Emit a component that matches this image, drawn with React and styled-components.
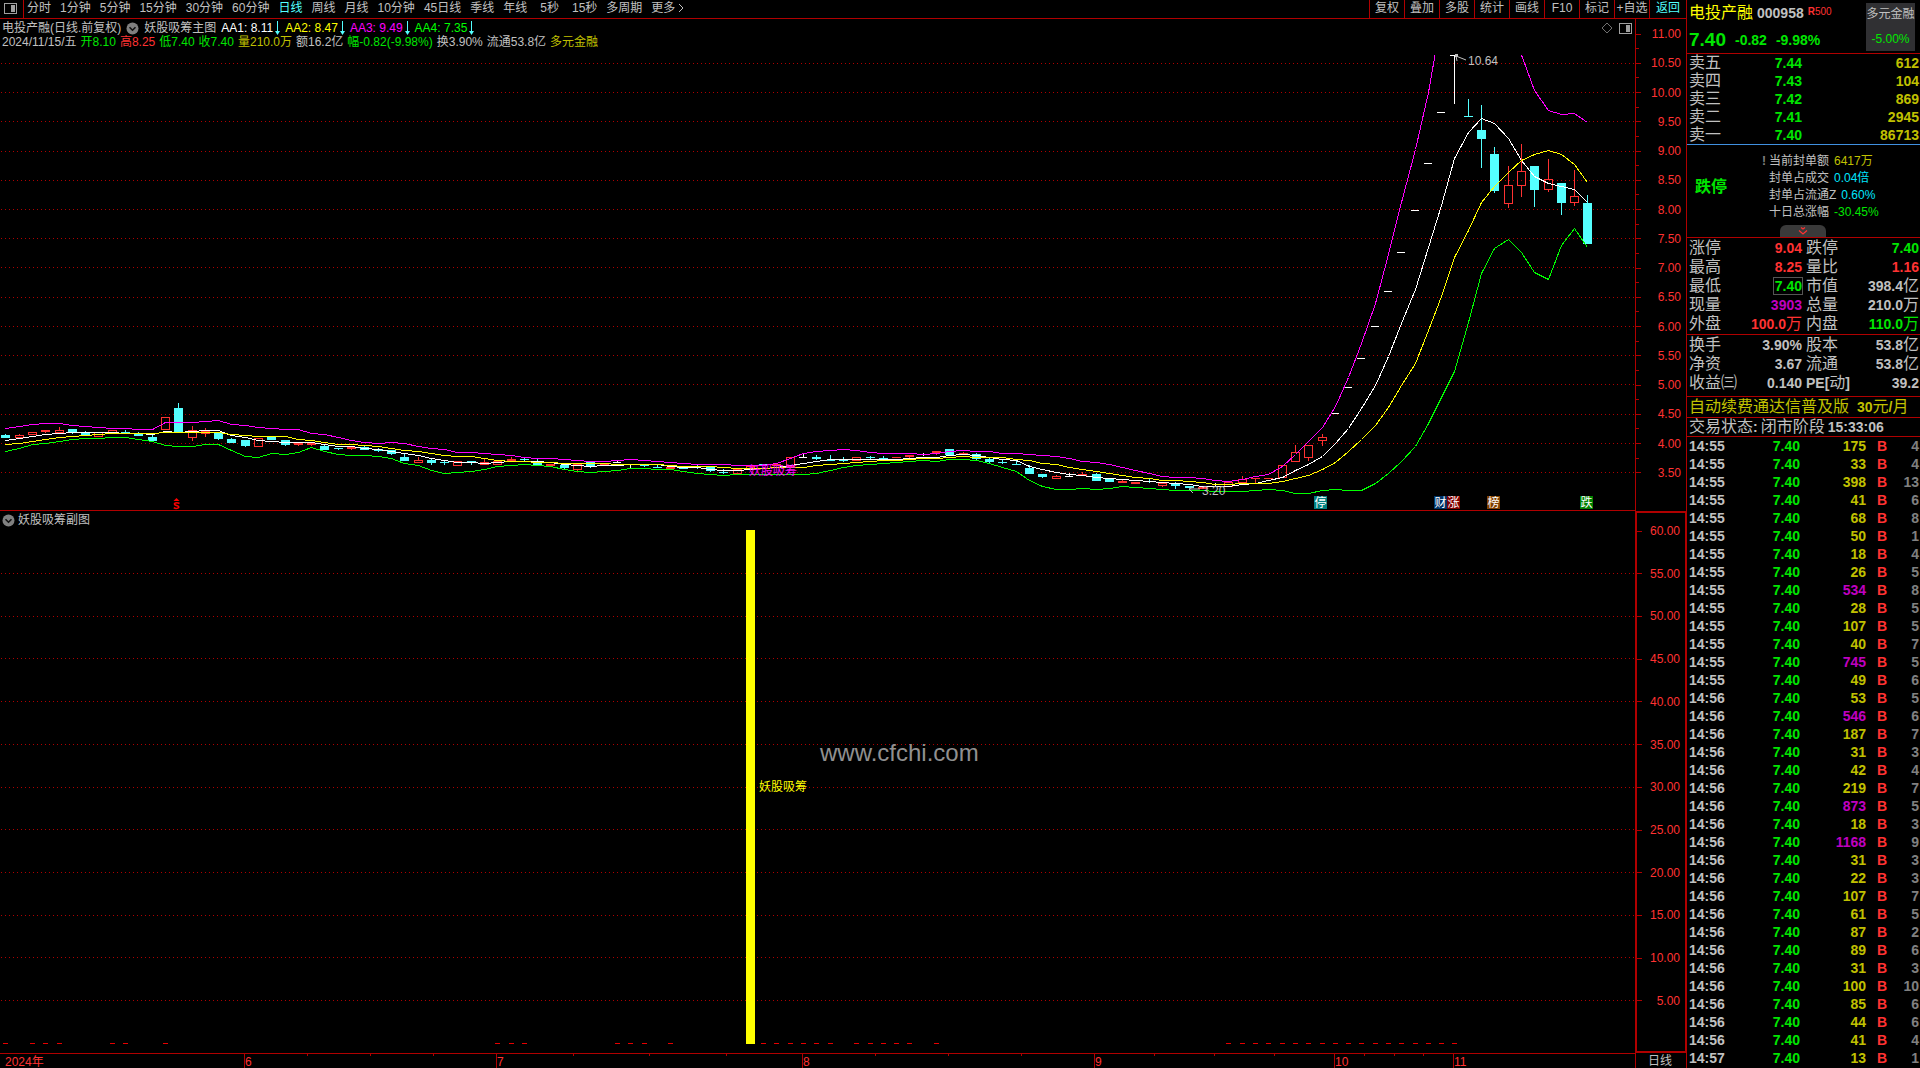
import React from "react";
import styled, { createGlobalStyle } from "styled-components";

const C = {
  line: "#b00000",
  red: "#ff3232",
  green: "#00e600",
  text: "#c0c0c0",
  yellow: "#c0c000",
  purple: "#c000c0",
  cyan: "#54ffff",
};

const FONT = '"Liberation Sans", "Noto Sans CJK SC", sans-serif';

const GlobalStyle = createGlobalStyle`
  * { box-sizing: border-box; }
  body {
    margin: 0;
    background: #000;
    color: ${C.text};
    font: 12px/14px ${FONT};
    overflow: hidden;
  }
  button { font: inherit; color: inherit; background: none; border: 0; padding: 0; margin: 0; cursor: pointer; }
  table { border-collapse: collapse; table-layout: fixed; width: 100%; }
  td, th { padding: 0; font-weight: 400; text-align: left; white-space: nowrap; }
  svg { display: block; }
`;

const Page = styled.div`
  display: grid;
  grid-template-columns: minmax(0, 1fr) 234px;
`;

const Workspace = styled.main`
  display: flex;
  flex-direction: column;
  min-width: 0;
`;

/* ---------- toolbar ---------- */
const Toolbar = styled.header`
  display: flex;
  height: 19px;
  border-bottom: 1px solid ${C.line};
`;
const LayoutButton = styled.button`
  width: 24px;
  display: flex;
  align-items: center;
  padding: 0 0 2px 4px;
  border-right: 1px solid ${C.line};
`;
const Tabs = styled.nav`
  display: flex;
  flex: 1;
  gap: 9px;
  padding: 1px 0 0 3px;
`;
const Tab = styled.button`
  display: flex;
  align-items: center;
  gap: 3px;
  height: 14px;
  white-space: nowrap;
  padding-left: ${(p) => (p.$indent ? "4px" : 0)};
  color: ${(p) => (p.$active ? C.cyan : C.text)};
`;
const Tools = styled.div`
  display: flex;
`;
const Tool = styled.button`
  width: ${(p) => (p.$active ? 37 : 35)}px;
  padding-bottom: 2px;
  white-space: nowrap;
  border-left: 1px solid ${C.line};
  color: ${(p) => (p.$active ? C.cyan : C.text)};
`;

/* ---------- charts ---------- */
const Pane = styled.section`
  display: grid;
  grid-template-columns: minmax(0, 1fr) 51px;
`;
const Plot = styled.div`
  min-width: 0;
  border-bottom: ${(p) => (p.$ruled ? `1px solid ${C.line}` : 0)};
`;
const Caption = styled.div`
  display: flex;
  justify-content: space-between;
  align-items: flex-start;
  height: ${(p) => p.$height}px;
  padding: 2px 3px 0 2px;
`;
const Line = styled.div`
  display: flex;
  align-items: center;
  gap: ${(p) => p.$gap || 4}px;
  height: 14px;
  white-space: nowrap;
`;
const Ink = styled.span`
  color: ${(p) => p.$color || C.text};
  display: inline-flex;
  align-items: center;
  gap: 2px;
`;
const CornerIcons = styled.div`
  display: flex;
  align-items: center;
  gap: 6px;
  height: 14px;
`;
const Drawing = styled.svg`
  width: 100%;
  height: auto;
  font: 12px ${FONT};
`;
const Axis = styled.ul`
  display: flex;
  flex-direction: column;
  justify-content: space-between;
  list-style: none;
  margin: 0;
  padding: ${(p) => p.$pad};
  border: solid ${C.line};
  border-width: ${(p) => (p.$boxed ? "2px 1px 2px 2px" : "0 0 0 1px")};
  color: ${C.red};
`;
const AxisItem = styled.li`
  display: flex;
  align-items: center;
  justify-content: space-between;
  height: 12px;
  line-height: 12px;
  padding-right: 5px;
  &::before {
    content: "";
    width: ${(p) => (p.$minor ? 3 : 5)}px;
    height: 1px;
    background: ${C.line};
  }
`;
const PeriodBox = styled.div`
  border-left: 1px solid ${C.line};
  padding-left: 12px;
  line-height: 16px;
`;

/* ---------- quote panel ---------- */
const Quote = styled.aside`
  border-left: 1px solid ${C.line};
  font-size: 14px;
`;
const Block = styled.section`
  padding: ${(p) => p.$pad || "0 1px 0 2px"};
  border-bottom: 1px solid ${(p) => p.$rule || C.line};
`;
const Title = styled.div`
  display: flex;
  justify-content: space-between;
  padding: 3px 4px 2px 0;
  height: 53px;
`;
const TitleText = styled.div`
  display: flex;
  flex-direction: column;
  justify-content: space-between;
`;
const NameRow = styled.h1`
  display: flex;
  gap: 4px;
  margin: 0;
  line-height: 20px;
  font-size: 16px;
  font-weight: 400;
  color: #ffff00;
`;
const Code = styled.b`
  font-size: 14px;
  color: ${C.text};
`;
const Badge = styled.span`
  font-size: 10px;
  line-height: 18px;
  color: ${C.red};
`;
const PriceRow = styled.div`
  display: flex;
  gap: 9px;
  align-items: center;
  line-height: 22px;
  font-weight: 700;
  color: ${C.green};
`;
const Price = styled.span`
  font-size: 19px;
`;
const Sector = styled.button`
  display: flex;
  flex-direction: column;
  justify-content: space-between;
  align-items: center;
  width: 49px;
  padding: 4px 0 5px;
  background: #303033;
  font-size: 12px;
  white-space: nowrap;
`;
const Cell = styled.td`
  height: ${(p) => p.$h || 18}px;
  line-height: ${(p) => p.$h || 18}px;
  text-align: ${(p) => p.$align || "right"};
  padding-left: ${(p) => p.$left || 0}px;
  color: ${(p) => p.$color || C.text};
  font-weight: 700;
`;
const Label = styled.th`
  height: ${(p) => p.$h || 18}px;
  line-height: ${(p) => p.$h || 18}px;
  padding-left: ${(p) => p.$left || 0}px;
  color: ${C.text};
`;
const Han = styled.span`
  font-size: 16px;
  font-weight: 400;
  line-height: 1;
`;
const Digits = styled.b`
  font-size: 14px;
`;
const Boxed = styled.span`
  outline: 1px solid #555;
  padding: 0 0 0 1px;
`;
const Limit = styled.div`
  display: grid;
  grid-template-columns: 67px 1fr;
  align-items: center;
  padding: 8px 0 4px 6px;
`;
const LimitTag = styled.strong`
  font-size: 16px;
  color: ${C.green};
`;
const Notes = styled.ul`
  list-style: none;
  margin: 0;
  padding: 0;
  font-size: 12px;
`;
const Note = styled.li`
  display: flex;
  gap: 5px;
  height: 17px;
  line-height: 17px;
  white-space: nowrap;
`;
const NoteName = styled.span`
  display: flex;
  align-items: center;
  gap: 2px;
  &::before {
    content: "${(p) => (p.$flag ? "!" : "")}";
    width: 5px;
    font-weight: 700;
    color: #808080;
  }
`;
const Fold = styled.button`
  display: flex;
  align-items: center;
  justify-content: center;
  width: 46px;
  height: 12px;
  margin: 0 0 0 91px;
  border-radius: 6px 6px 0 0;
  background: #3a3a3a;
`;
const Promo = styled.div`
  display: flex;
  gap: ${(p) => p.$gap}px;
  height: ${(p) => p.$h}px;
  line-height: ${(p) => p.$h}px;
  white-space: nowrap;
  color: ${(p) => p.$color || C.text};
`;

/* ---------- data ---------- */
const TABS = ["分时", "1分钟", "5分钟", "15分钟", "30分钟", "60分钟", "日线", "周线", "月线", "10分钟", "45日线", "季线", "年线", "5秒", "15秒", "多周期", "更多"];
const TOOLS = ["复权", "叠加", "多股", "统计", "画线", "F10", "标记", "+自选", "返回"];

const INDICATORS = [
  ["AA1: 8.11", "#ffffff"],
  ["AA2: 8.47", "#ffff00"],
  ["AA3: 9.49", "#ff00ff"],
  ["AA4: 7.35", "#00ff00"],
];
const DAY = [
  ["2024/11/15/五", C.text],
  ["开8.10", C.green],
  ["高8.25", C.red],
  ["低7.40", C.green],
  ["收7.40", C.green],
  ["量210.0万", C.yellow],
  ["额16.2亿", C.text],
  ["幅-0.82(-9.98%)", C.green],
  ["换3.90%", C.text],
  ["流通53.8亿", C.text],
  ["多元金融", C.yellow],
];

// One value per trading day, in drawing units from the top of the window.
const AA3_RISE = [428, 426, 424, 423, 423, 425, 426, 427, 428, 428, 429, 429, 422, 422, 422, 421, 420, 424, 425, 427, 428, 429, 429, 433, 434, 437, 440, 442, 443, 442, 443, 446, 448, 449, 452, 452, 453, 454, 455, 457, 458, 458, 459, 460, 461, 461, 460, 459, 460, 461, 462, 463, 464, 464, 464, 465, 465, 465, 463, 458, 453, 451, 450, 449, 450, 452, 453, 453, 453, 454, 453, 451, 450, 451, 451, 453, 453, 454, 455, 456, 458, 461, 462, 464, 467, 470, 473, 476, 477, 477, 478, 480, 481, 479, 476, 474, 466, 454, 441, 427, 406, 377, 343, 303, 254, 202, 149, 92];
const AA3_FALL = [90, 110, 114, 113, 122];
const AA1 = [440, 438, 436, 434, 433, 432, 432, 432, 432, 433, 433, 434, 431, 432, 431, 430, 430, 435, 437, 440, 441, 442, 442, 442, 444, 446, 446, 448, 449, 451, 453, 455, 458, 460, 462, 462, 463, 462, 461, 461, 461, 462, 464, 465, 466, 465, 465, 464, 464, 464, 466, 467, 467, 469, 470, 470, 469, 468, 467, 465, 463, 461, 459, 459, 459, 459, 459, 459, 458, 457, 457, 455, 454, 455, 457, 459, 460, 466, 469, 472, 474, 475, 477, 478, 479, 480, 481, 482, 483, 484, 486, 486, 486, 484, 483, 480, 477, 470, 464, 456, 443, 428, 408, 385, 356, 323, 289, 247, 205, 158, 132, 118, 123, 138, 160, 176, 183, 186, 189, 202];
const AA2 = [444, 443, 441, 439, 437, 436, 435, 434, 433, 433, 433, 433, 432, 432, 432, 432, 432, 434, 435, 436, 436, 436, 439, 440, 442, 444, 444, 445, 446, 448, 450, 451, 453, 455, 456, 456, 458, 460, 461, 461, 462, 462, 463, 463, 463, 463, 464, 464, 464, 464, 465, 466, 466, 466, 467, 468, 468, 468, 467, 467, 467, 465, 464, 463, 462, 461, 460, 460, 459, 458, 458, 457, 456, 457, 457, 457, 459, 460, 463, 464, 467, 469, 471, 473, 475, 477, 478, 480, 480, 481, 482, 484, 484, 483, 483, 483, 481, 478, 475, 469, 462, 451, 439, 425, 407, 385, 363, 330, 296, 257, 230, 202, 186, 172, 160, 154, 150, 154, 164, 182];
const AA4 = [451, 448, 444, 443, 441, 439, 438, 438, 437, 437, 439, 441, 445, 446, 446, 444, 444, 450, 456, 457, 453, 454, 452, 447, 451, 454, 455, 455, 456, 458, 463, 465, 470, 473, 472, 471, 469, 466, 465, 464, 465, 466, 469, 471, 472, 471, 470, 468, 468, 469, 469, 471, 473, 474, 475, 474, 474, 474, 474, 474, 474, 473, 470, 467, 465, 464, 463, 462, 461, 460, 461, 459, 459, 460, 463, 467, 471, 480, 486, 489, 489, 488, 489, 488, 486, 487, 488, 489, 490, 490, 490, 491, 491, 491, 490, 489, 490, 493, 493, 490, 489, 490, 490, 483, 473, 461, 446, 423, 397, 371, 322, 273, 248, 239, 252, 272, 279, 245, 228, 247];

// day, kind (d: down, u: up, f: flat), body top, body bottom, high, low
const CANDLES = [
  [0, "d", 435, 438, 434], [1, "u", 435, 438, 434], [2, "u", 432, 435], [3, "u", 430, 432, 430, 433], [4, "u", 430, 433, 427],
  [5, "d", 429, 432, 429, 434], [6, "d", 432, 435, 431], [7, "u", 432, 437], [8, "u", 430, 433], [9, "d", 432, 433, 430],
  [10, "d", 433, 436, 432], [11, "d", 437, 441, 435], [12, "u", 417, 430], [13, "d", 408, 432, 403], [14, "u", 430, 438, 426, 441],
  [15, "u", 431, 434, 428, 437], [16, "d", 432, 439, 432, 440], [17, "d", 439, 443, 438], [18, "d", 440, 446, 440, 447], [19, "u", 438, 447],
  [20, "d", 437, 440], [21, "d", 440, 445, 440, 446], [22, "u", 443, 445, 443, 446], [23, "u", 443, 445, 443, 446], [24, "d", 446, 450, 444],
  [25, "d", 448, 449, 448, 450], [26, "u", 447, 449, 447, 450], [27, "d", 447, 450, 446], [28, "d", 449, 451, 448, 452], [29, "d", 450, 454, 450, 455],
  [30, "d", 457, 461, 453], [31, "u", 460, 463, 457], [32, "d", 460, 463, 458, 465], [33, "d", 462, 463, 460, 465], [34, "u", 461, 466],
  [35, "d", 461, 462, 461, 465], [36, "u", 462, 465, 459], [37, "u", 461, 465], [38, "u", 459, 461, 457], [39, "d", 459, 460, 458, 462],
  [40, "d", 461, 465, 459], [41, "u", 464, 466], [42, "d", 465, 468, 465, 469], [43, "u", 464, 470, 464, 471], [44, "d", 462, 466, 462, 468],
  [45, "u", 463, 465], [46, "f", 462, 463, 461], [47, "f", 464, 465, 464, 468], [48, "d", 465, 466, 465, 467], [49, "d", 467, 468, 465],
  [50, "u", 467, 469], [51, "d", 467, 469], [52, "d", 466, 467, 465, 469], [53, "d", 467, 471, 467, 472], [54, "d", 472, 473, 469, 474],
  [55, "u", 469, 474], [56, "u", 466, 469], [57, "d", 464, 465], [58, "u", 464, 466], [59, "u", 457, 467],
  [60, "f", 457, 458, 453], [61, "d", 457, 459, 455, 460], [62, "d", 460, 461, 455], [63, "d", 460, 461, 457, 462], [64, "u", 457, 461],
  [65, "d", 457, 458, 456, 459], [66, "d", 458, 460, 456], [67, "u", 457, 458], [68, "u", 455, 457, 455, 460], [69, "f", 454, 455, 453, 456],
  [70, "u", 451, 453, 451, 455], [71, "d", 449, 455], [72, "u", 453, 454, 452], [73, "d", 454, 459, 453, 460], [74, "d", 459, 462, 458, 463],
  [75, "d", 462, 463, 460, 464], [76, "d", 464, 465, 461], [77, "d", 468, 474, 465], [78, "d", 474, 477, 474, 478], [79, "u", 476, 479, 475],
  [80, "f", 476, 477, 473], [81, "u", 474, 476, 472], [82, "d", 474, 481, 473], [83, "d", 479, 482], [84, "u", 481, 483, 479],
  [85, "u", 482, 484], [86, "d", 481, 482, 479, 483], [87, "u", 483, 486, 483, 487], [88, "d", 484, 486, 482, 489], [89, "d", 486, 488],
  [90, "u", 487, 489], [91, "f", 486, 487, 483], [92, "u", 482, 487], [93, "u", 479, 483, 476], [94, "u", 478, 479, 478, 483],
  [95, "u", 478, 479], [96, "u", 465, 478], [97, "u", 452, 462, 445], [98, "u", 445, 458, 445, 461], [99, "u", 437, 441, 434, 446],
  [100, "f", 413, 414], [101, "f", 387, 388], [102, "f", 358, 359], [103, "f", 326, 327], [104, "f", 291, 292],
  [105, "f", 252, 253], [106, "f", 210, 211], [107, "f", 163, 164], [108, "f", 112, 113], [109, "f", 55, 56, 55, 104],
  [110, "d", 116, 117, 99], [111, "d", 130, 139, 105, 168], [112, "d", 154, 191, 147, 193], [113, "u", 185, 204, 166, 208], [114, "u", 171, 186, 144, 197],
  [115, "d", 166, 190, 166, 207], [116, "u", 179, 190, 159, 192], [117, "d", 183, 203, 183, 215], [118, "u", 196, 203, 170, 206], [119, "d", 203, 244, 195],
];

const MARKS = [
  [1314, "停", "#008080"],
  [1434, "财", "#003366"],
  [1447, "涨", "#800000"],
  [1487, "榜", "#804000"],
  [1580, "跌", "#008000"],
];

const DASH_DAYS = [0, 2, 3, 4, 8, 9, 12, 37, 38, 39, 46, 47, 48, 50, 57, 58, 59, 60, 61, 62, 64, 65, 66, 67, 68, 70, ...Array.from({ length: 18 }, (_, i) => 92 + i)];
const MONTHS = [[244, "6"], [496, "7"], [802, "8"], [1094, "9"], [1334, "10"], [1453, "11"]];
const WEEKS = [307, 370, 433, 573, 649, 726, 875, 948, 1021, 1154, 1214, 1274, 1364, 1394, 1423];

const ASKS = [["卖五", "7.44", "612"], ["卖四", "7.43", "104"], ["卖三", "7.42", "869"], ["卖二", "7.41", "2945"], ["卖一", "7.40", "86713"]];
const NOTES = [
  ["当前封单额", "6417万", C.yellow],
  ["封单占成交", "0.04倍", "#00e6ff"],
  ["封单占流通Z", "0.60%", "#00e6ff"],
  ["十日总涨幅", "-30.45%", C.green],
];
const STATS = [
  ["涨停", "9.04", C.red, "跌停", "7.40", C.green],
  ["最高", "8.25", C.red, "量比", "1.16", C.red],
  ["最低", "7.40", C.green, "市值", "398.4亿", C.text, true],
  ["现量", "3903", C.purple, "总量", "210.0万", C.text],
  ["外盘", "100.0万", C.red, "内盘", "110.0万", C.green],
];
const BASICS = [
  ["换手", "3.90%", C.text, "股本", "53.8亿", C.text],
  ["净资", "3.67", C.text, "流通", "53.8亿", C.text],
  ["收益㈢", "0.140", C.text, "PE[动]", "39.2", C.text],
];
const VOLUMES = [175, 33, 398, 41, 68, 50, 18, 26, 534, 28, 107, 40, 745, 49, 53, 546, 187, 31, 42, 219, 873, 18, 1168, 31, 22, 107, 61, 87, 89, 31, 100, 85, 44, 41, 13];
const COUNTS = [4, 4, 13, 6, 8, 1, 4, 5, 8, 5, 5, 7, 5, 6, 5, 6, 7, 3, 4, 7, 5, 3, 9, 3, 3, 7, 5, 2, 6, 3, 10, 6, 6, 4, 1];
const tickTime = (i) => (i < 14 ? "14:55" : i < 34 ? "14:56" : "14:57");

/* ---------- helpers ---------- */
const dayX = (i) => 5.4 + 13.294 * i;
const toPoints = (values, from = 0) => values.map((y, i) => `${Math.round(dayX(i + from)) + 0.5},${y + 0.5}`).join(" ");

function Mixed({ text }) {
  return text
    .split(/([\u3200-\u9fff]+)/)
    .filter(Boolean)
    .map((part, i) => (/[\u3200-\u9fff]/.test(part) ? <Han key={i}>{part}</Han> : <Digits key={i}>{part}</Digits>));
}

function Candle({ day, kind, top, bottom, high = top, low = bottom }) {
  const x = Math.round(dayX(day)) - 4;
  const color = { d: C.cyan, u: C.red, f: "#ffffff" }[kind];
  const hollow = kind === "u" && bottom - top > 2;
  return (
    <g fill={color}>
      {high < top && <rect x={x + 4} y={high} width="1" height={top - high} />}
      {low > bottom && <rect x={x + 4} y={bottom} width="1" height={low - bottom} />}
      {hollow ? (
        <rect x={x + 0.5} y={top + 0.5} width="8" height={bottom - top - 1} fill="none" stroke={color} />
      ) : (
        <rect x={x} y={top} width={kind === "f" ? 8 : 9} height={bottom - top} />
      )}
    </g>
  );
}

const PanelIcon = ({ size }) => (
  <svg width={size} height={size} viewBox="0 0 13 13" shapeRendering="crispEdges" aria-hidden="true">
    <rect x="0.5" y="1.5" width="12" height="10" rx="1" fill="none" stroke="#a0a0a0" />
    <rect x="7" y="3" width="4" height="7" fill="#a0a0a0" />
  </svg>
);
const DropIcon = () => (
  <svg width="13" height="13" viewBox="0 0 13 13" aria-hidden="true">
    <circle cx="6.5" cy="6.5" r="6" fill="#808080" />
    <path d="M3.5 5.2 6.5 8.2 9.5 5.2" fill="none" stroke="#111" strokeWidth="1.6" />
  </svg>
);
const DownArrow = () => (
  <svg width="5" height="14" viewBox="0 0 5 14" aria-hidden="true">
    <path d="M2 0h1v10h2L2.5 14 0 10h2z" fill={C.cyan} />
  </svg>
);

function Grid({ rows }) {
  return rows.map((y) => (
    <line key={y} x1="1" x2="1635" y1={y + 0.5} y2={y + 0.5} stroke="#b00000" strokeDasharray="1 3" />
  ));
}

function PriceChart() {
  return (
    <Drawing viewBox="0 49 1635 461" role="img" aria-label="妖股吸筹主图">
      <g shapeRendering="crispEdges">
        <Grid rows={Array.from({ length: 15 }, (_, i) => Math.round(63 + i * 29.21))} />
        {CANDLES.map(([day, kind, top, bottom, high, low]) => (
          <Candle key={day} {...{ day, kind, top, bottom, high, low }} />
        ))}
      </g>
      <g fill="none" strokeWidth="1" shapeRendering="crispEdges">
        <polyline points={toPoints(AA4)} stroke="#00ff00" />
        <polyline points={`${toPoints(AA3_RISE)} 1435,55`} stroke="#ff00ff" />
        <polyline points={`1521.5,55 ${toPoints(AA3_FALL, 115)}`} stroke="#ff00ff" />
        <polyline points={toPoints(AA1)} stroke="#ffffff" />
        <polyline points={toPoints(AA2)} stroke="#ffff00" />
      </g>
      <g fill={C.text}>
        <rect x="1455" y="54" width="3" height="3" />
        <path d="M1456 56l10 4M1456 56l1 5" stroke={C.text} />
        <text x="1468" y="65">10.64</text>
        <path d="M1200 489h-11l4-2M1189 489l4 4" fill="none" stroke={C.text} />
        <text x="1202" y="495">3.20</text>
      </g>
      <text x="749" y="475" fill="#ff00ff">妖股吸筹</text>
      <g fill="none" stroke="#ff0000" strokeWidth="1.6">
        <path d="M173.500 501l3-3 3 3z" fill="#ff0000" stroke="none" />
        <path d="M179.500 503.500q-2-1.200-4-.6t-.2 2.200l2.500 .8q2 1.200 0 2.200t-4-.5" />
      </g>
      {MARKS.map(([x, label, color]) => (
        <g key={x}>
          <rect x={x} y="496" width="13" height="13" fill={color} />
          <text x={x + 0.5} y="507" fill="#ffffff">{label}</text>
        </g>
      ))}
    </Drawing>
  );
}

function SignalChart() {
  return (
    <Drawing viewBox="0 530 1635 523" role="img" aria-label="妖股吸筹副图">
      <g shapeRendering="crispEdges">
        <Grid rows={Array.from({ length: 11 }, (_, i) => Math.round(573 + i * 42.7))} />
        <rect x="746" y="530" width="9" height="514" fill="#ffff00" />
        {DASH_DAYS.map((d) => (
          <rect key={d} x={Math.round(dayX(d)) - 2} y="1043" width="5" height="1" fill="#e60000" />
        ))}
      </g>
      <text x="759" y="791" fill="#ffff00">妖股吸筹</text>
      <text x="820" y="761" fill="#909090" fontSize="24">www.cfchi.com</text>
    </Drawing>
  );
}

function TimeAxis() {
  return (
    <Drawing viewBox="0 1053 1635 15" fill={C.red} role="img" aria-label="时间轴">
      <g fill={C.line} shapeRendering="crispEdges">
        <rect x="0" y="1053" width="1635" height="1" />
        {MONTHS.map(([x]) => <rect key={x} x={x} y="1053" width="1" height="15" />)}
        {WEEKS.map((x) => <rect key={x} x={x} y="1053" width="1" height="3" />)}
      </g>
      <text x="5" y="1066">2024年</text>
      {MONTHS.map(([x, m]) => <text key={x} x={x + 1} y="1066">{m}</text>)}
    </Drawing>
  );
}

function StatTable({ rows }) {
  return (
    <table>
      <colgroup>
        <col style={{ width: 50 }} />
        <col style={{ width: 63 }} />
        <col style={{ width: 46 }} />
        <col />
      </colgroup>
      <tbody>
        {rows.map(([a, av, ac, b, bv, bc, boxed]) => (
          <tr key={a}>
            <Label $h={19} scope="row"><Mixed text={a} /></Label>
            <Cell $h={19} $color={ac}>{boxed ? <Boxed><Mixed text={av} /></Boxed> : <Mixed text={av} />}</Cell>
            <Label $h={19} $left={4} scope="row"><Mixed text={b} /></Label>
            <Cell $h={19} $color={bc}><Mixed text={bv} /></Cell>
          </tr>
        ))}
      </tbody>
    </table>
  );
}

export default function App() {
  return (
    <Page>
      <GlobalStyle />
      <Workspace>
        <Toolbar>
          <LayoutButton aria-label="切换布局"><PanelIcon size={13} /></LayoutButton>
          <Tabs>
            {TABS.map((t) => (
              <Tab key={t} $active={t === "日线"} $indent={t.endsWith("秒")}>
                {t}
                {t === "更多" && (
                  <svg width="6" height="10" viewBox="0 0 6 10" aria-hidden="true">
                    <path d="M1 1l4 4-4 4" fill="none" stroke={C.text} />
                  </svg>
                )}
              </Tab>
            ))}
          </Tabs>
          <Tools>
            {TOOLS.map((t) => <Tool key={t} $active={t === "返回"}>{t}</Tool>)}
          </Tools>
        </Toolbar>

        <Pane>
          <Plot $ruled>
            <Caption $height={30}>
              <div>
                <Line $gap={5}>
                  <span>电投产融(日线.前复权)</span>
                  <DropIcon />
                  <span>妖股吸筹主图</span>
                  {INDICATORS.map(([t, c]) => (
                    <Ink key={t} $color={c}>{t}<DownArrow /></Ink>
                  ))}
                </Line>
                <Line>
                  {DAY.map(([t, c]) => <Ink key={t} $color={c}>{t}</Ink>)}
                </Line>
              </div>
              <CornerIcons>
                <svg width="12" height="12" viewBox="0 0 12 12" aria-hidden="true">
                  <path d="M6 1l5 5-5 5-5-5z" fill="none" stroke="#707070" />
                </svg>
                <PanelIcon size={13} />
              </CornerIcons>
            </Caption>
            <PriceChart />
          </Plot>
          <Axis $pad="9px 0 32px">
            {Array.from({ length: 31 }, (_, i) => (
              <AxisItem key={i} $minor={i % 2 === 1}>{i % 2 ? "" : (11 - i / 4).toFixed(2)}</AxisItem>
            ))}
          </Axis>
        </Pane>

        <Pane>
          <Plot>
            <Caption $height={19}>
              <Line $gap={3}>
                <DropIcon />
                <span>妖股吸筹副图</span>
              </Line>
            </Caption>
            <SignalChart />
          </Plot>
          <Axis $boxed $pad="12px 0 44px">
            {Array.from({ length: 12 }, (_, i) => (
              <AxisItem key={i}>{(60 - i * 5).toFixed(2)}</AxisItem>
            ))}
          </Axis>
        </Pane>

        <Pane>
          <TimeAxis />
          <PeriodBox>日线</PeriodBox>
        </Pane>
      </Workspace>

      <Quote>
        <Block>
          <Title>
            <TitleText>
              <NameRow>电投产融 <Code>000958</Code><Badge><b>R</b>500</Badge></NameRow>
              <PriceRow><Price>7.40</Price><span>-0.82</span><span>-9.98%</span></PriceRow>
            </TitleText>
            <Sector><span>多元金融</span><Ink $color={C.green}>-5.00%</Ink></Sector>
          </Title>
        </Block>
        <Block $rule="#4090e0">
          <table>
            <colgroup><col style={{ width: 50 }} /><col style={{ width: 63 }} /><col /></colgroup>
            <tbody>
              {ASKS.map(([n, p, v]) => (
                <tr key={n}>
                  <Label scope="row"><Mixed text={n} /></Label>
                  <Cell $color={C.green}>{p}</Cell>
                  <Cell $color={C.yellow}>{v}</Cell>
                </tr>
              ))}
            </tbody>
          </table>
        </Block>
        <Block>
          <Limit>
            <LimitTag>跌停</LimitTag>
            <Notes>
              {NOTES.map(([n, v, c], i) => (
                <Note key={n}><NoteName $flag={i === 0}>{n}</NoteName><Ink $color={c}>{v}</Ink></Note>
              ))}
            </Notes>
          </Limit>
          <Fold aria-label="收起">
            <svg width="10" height="8" viewBox="0 0 10 8" aria-hidden="true">
              <path d="M3 0.500l2 1.500 2-1.500M1 3.500l4 3.500 4-3.500" fill="none" stroke={C.red} strokeWidth="1.2" />
            </svg>
          </Fold>
        </Block>
        <Block $pad="1px 1px 0 2px"><StatTable rows={STATS} /></Block>
        <Block $pad="1px 1px 3px 2px"><StatTable rows={BASICS} /></Block>
        <Block>
          <Promo $h={20} $gap={8} $color={C.yellow}>
            <span><Mixed text="自动续费通达信普及版" /></span>
            <span><Mixed text="30元/月" /></span>
          </Promo>
        </Block>
        <Block>
          <Promo $h={18} $gap={3}>
            <span><Mixed text="交易状态:" /></span>
            <span><Mixed text="闭市阶段" /></span>
            <span><Mixed text="15:33:06" /></span>
          </Promo>
        </Block>
        <Block as="div" $rule="#000">
          <table>
            <colgroup>
              <col style={{ width: 50 }} /><col style={{ width: 61 }} /><col style={{ width: 66 }} /><col style={{ width: 24 }} /><col />
            </colgroup>
            <tbody>
              {VOLUMES.map((v, i) => (
                <tr key={i}>
                  <Cell $align="left">{tickTime(i)}</Cell>
                  <Cell $color={C.green}>7.40</Cell>
                  <Cell $color={v > 500 ? C.purple : C.yellow}>{v}</Cell>
                  <Cell $color={C.red} $align="left" $left={11}>B</Cell>
                  <Cell $color="#808080">{COUNTS[i]}</Cell>
                </tr>
              ))}
            </tbody>
          </table>
        </Block>
      </Quote>
    </Page>
  );
}
